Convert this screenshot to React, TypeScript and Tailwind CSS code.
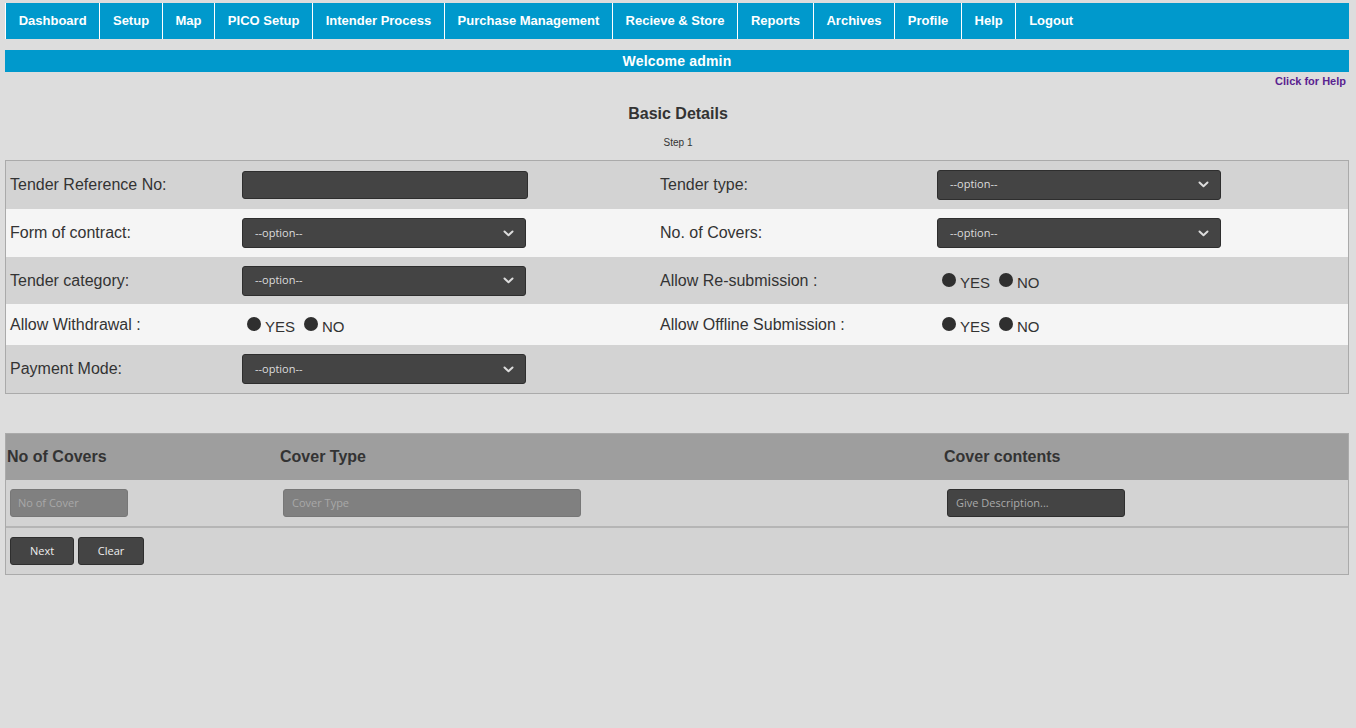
import React from "react";

const navItems = [
  "Dashboard",
  "Setup",
  "Map",
  "PICO Setup",
  "Intender Process",
  "Purchase Management",
  "Recieve & Store",
  "Reports",
  "Archives",
  "Profile",
  "Help",
  "Logout",
];

function Chevron() {
  return (
    <svg width="11" height="7" viewBox="0 0 11 7" className="shrink-0">
      <polyline points="1.5,1.5 5.5,5.2 9.5,1.5" fill="none" stroke="#ddd" strokeWidth="2" strokeLinecap="round" strokeLinejoin="round" />
    </svg>
  );
}

function Select() {
  return (
    <div className="w-[284px] h-[30px] bg-[#444] border border-[#2e2e2e] rounded-[3px] flex items-center justify-between pl-[12px] pr-[11px] text-[11px] text-[#ddd] font-['Open_Sans',sans-serif]">
      <span>--option--</span>
      <Chevron />
    </div>
  );
}

function Radio({ label }: { label: string }) {
  return (
    <span className="flex items-end mr-[9px]">
      <span className="w-[14px] h-[14px] rounded-full bg-[#2f2f2f] mb-[4px]" />
      <span className="text-[15px] text-[#333] ml-[4px] leading-[17px]">{label}</span>
    </span>
  );
}

function YesNo() {
  return (
    <div className="flex items-center pl-[5px] pt-[2px]">
      <Radio label="YES" />
      <Radio label="NO" />
    </div>
  );
}

function FormRow({
  bg,
  h,
  label1,
  field1,
  label2,
  field2,
}: {
  bg: string;
  h: string;
  label1: string;
  field1: React.ReactNode;
  label2?: string;
  field2?: React.ReactNode;
}) {
  return (
    <div className={`grid grid-cols-[232px_418px_277px_1fr] items-center ${bg} ${h}`}>
      <div className="pl-[4px] text-[16px] text-[#333]">{label1}</div>
      <div className="pl-[4px]">{field1}</div>
      <div className="pl-[4px] text-[16px] text-[#333]">{label2}</div>
      <div className="pl-[4px]">{field2}</div>
    </div>
  );
}

export default function App() {
  return (
    <div className="min-h-[728px] bg-[#dddddd] font-['Liberation_Sans',Arial,sans-serif] pt-[3px]">
      <div className="ml-[5px] w-[1344px] h-[36px] bg-[#0099cc] flex">
        {navItems.map((item) => (
          <div
            key={item}
            className="border-l border-white px-[12.7px] flex items-center text-[13px] font-bold text-white whitespace-nowrap"
          >
            {item}
          </div>
        ))}
      </div>

      <div className="ml-[5px] w-[1344px] mt-[11px] h-[22px] bg-[#0099cc] flex items-center justify-center text-[14px] font-bold text-white tracking-[0.2px]">
        Welcome admin
      </div>

      <div className="ml-[5px] w-[1344px] flex justify-end pr-[3px] pt-[2px]">
        <span className="text-[11px] font-bold text-[#5a2390] leading-[14px]">Click for Help</span>
      </div>

      <div className="text-center text-[16px] font-bold text-[#333] mt-[16px] leading-[20px]">Basic Details</div>
      <div className="text-center text-[10px] text-[#333] mt-[12px] leading-[13px]">Step 1</div>

      <div className="ml-[5px] w-[1344px] mt-[11px] border border-[#aaa]">
        <FormRow
          bg="bg-[#d3d3d3]"
          h="h-[48px]"
          label1="Tender Reference No:"
          field1={<div className="w-[286px] h-[28px] bg-[#444] border border-[#2e2e2e] rounded-[3px] -mt-[1px]" />}
          label2="Tender type:"
          field2={<div className="-mt-[1px]"><Select /></div>}
        />
        <FormRow
          bg="bg-[#f5f5f5]"
          h="h-[48px]"
          label1="Form of contract:"
          field1={<Select />}
          label2="No. of Covers:"
          field2={<Select />}
        />
        <FormRow
          bg="bg-[#d3d3d3]"
          h="h-[47px]"
          label1="Tender category:"
          field1={<Select />}
          label2="Allow Re-submission :"
          field2={<YesNo />}
        />
        <FormRow
          bg="bg-[#f5f5f5]"
          h="h-[41px]"
          label1="Allow Withdrawal :"
          field1={<YesNo />}
          label2="Allow Offline Submission :"
          field2={<YesNo />}
        />
        <FormRow bg="bg-[#d3d3d3]" h="h-[48px]" label1="Payment Mode:" field1={<Select />} />
      </div>

      <div className="ml-[5px] w-[1344px] mt-[39px] border border-[#aaa] bg-[#d3d3d3]">
        <div className="grid grid-cols-[273px_664px_1fr] h-[46px] items-center bg-[#9e9e9e] text-[16px] font-bold text-[#333]">
          <div className="pl-[1px]">No of Covers</div>
          <div className="pl-[1px]">Cover Type</div>
          <div className="pl-[1px]">Cover contents</div>
        </div>
        <div className="grid grid-cols-[273px_664px_1fr] h-[46px] items-center font-['Open_Sans',sans-serif] text-[11px]">
          <div className="pl-[4px]">
            <div className="w-[118px] h-[28px] bg-[#808080] border border-[#777] rounded-[3px] flex items-center pl-[7px] text-[#a8a8a8]">
              No of Cover
            </div>
          </div>
          <div className="pl-[4px]">
            <div className="w-[298px] h-[28px] bg-[#808080] border border-[#777] rounded-[3px] flex items-center pl-[8px] text-[#a8a8a8]">
              Cover Type
            </div>
          </div>
          <div className="pl-[4px]">
            <div className="w-[178px] h-[28px] bg-[#444] border border-[#2e2e2e] rounded-[3px] flex items-center pl-[8px] text-[#aaa]">
              Give Description...
            </div>
          </div>
        </div>
        <div className="border-t-2 border-[#b5b5b5] h-[48px] flex items-center gap-[4px] pl-[4px] font-['Open_Sans',sans-serif] text-[11px] text-[#eee]">
          <div className="w-[64px] h-[28px] bg-[#444] border border-[#2e2e2e] rounded-[3px] flex items-center justify-center">Next</div>
          <div className="w-[66px] h-[28px] bg-[#444] border border-[#2e2e2e] rounded-[3px] flex items-center justify-center">Clear</div>
        </div>
      </div>
    </div>
  );
}
